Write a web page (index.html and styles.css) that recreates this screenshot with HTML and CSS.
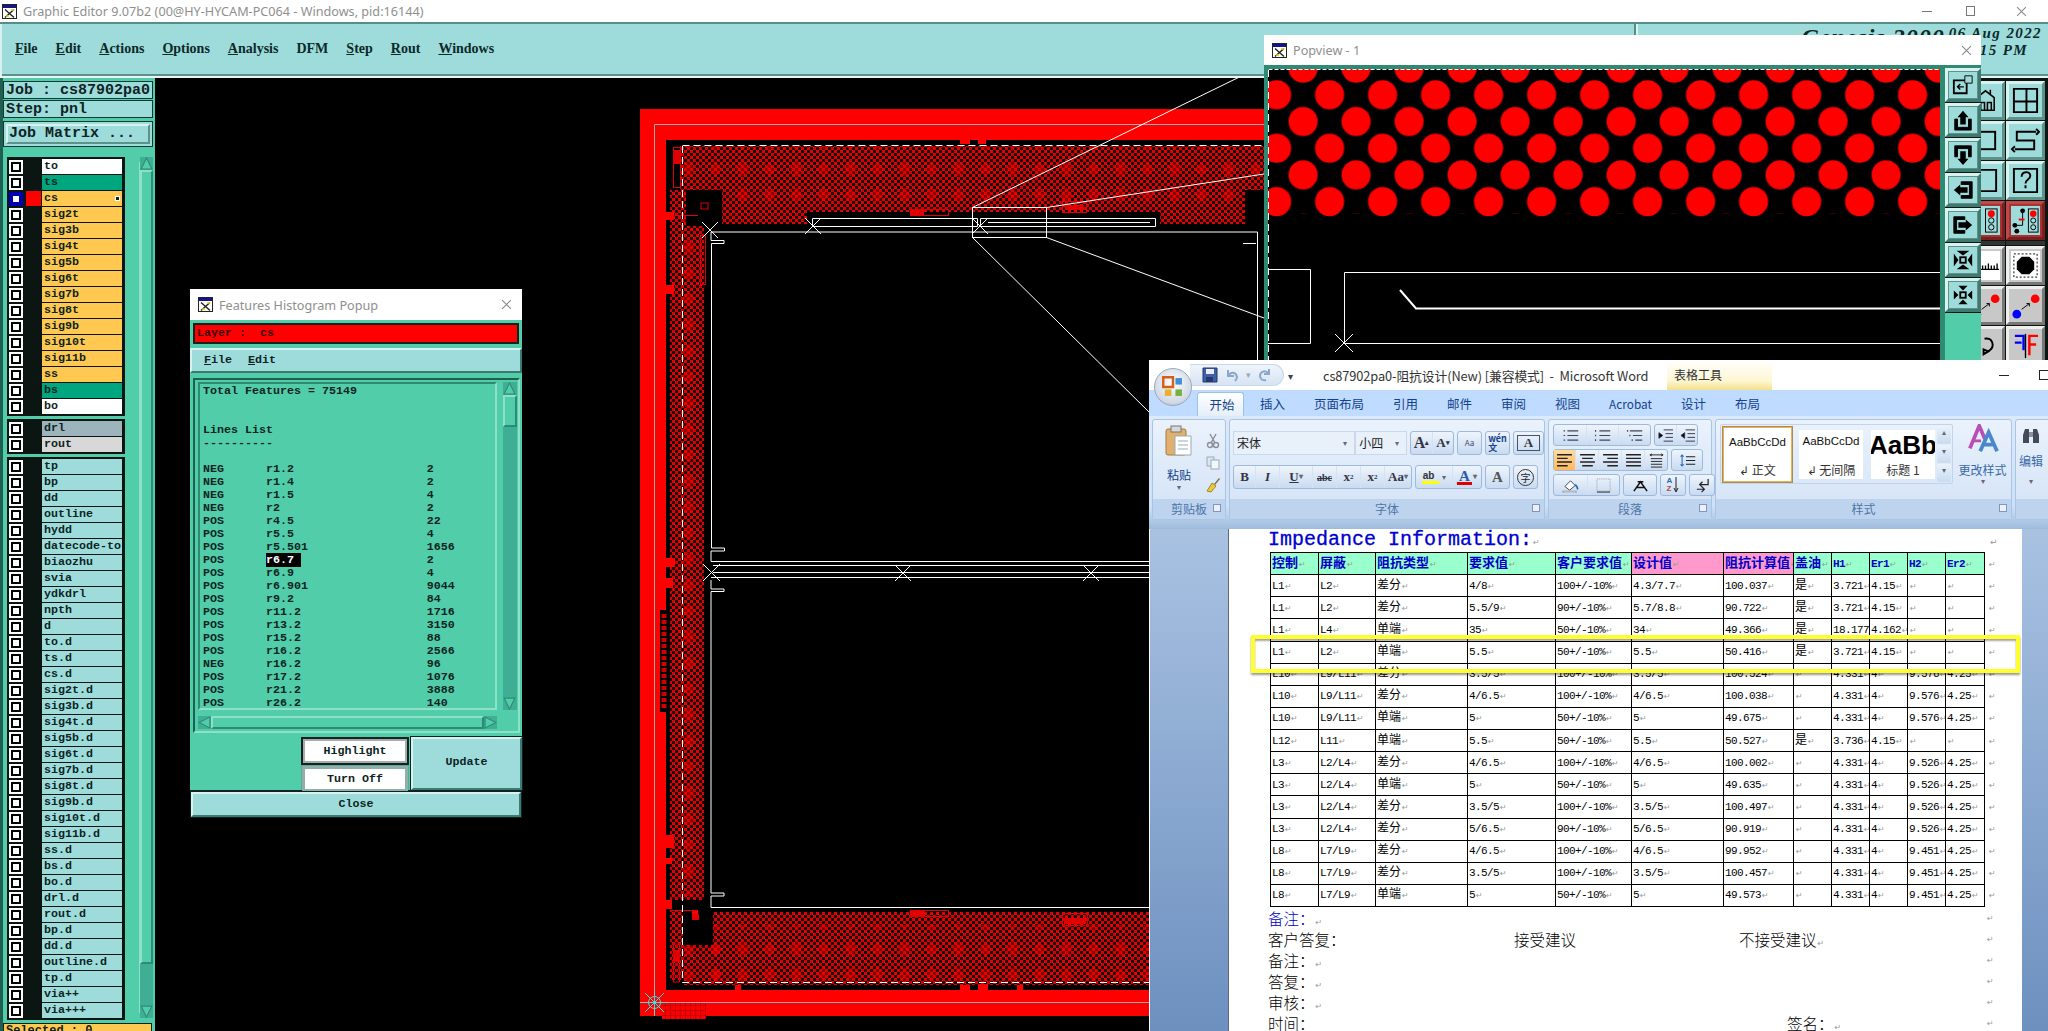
FILE: index.html
```html
<!DOCTYPE html>
<html lang="en">
<head>
<meta charset="utf-8">
<title>Graphic Editor</title>
<link rel="stylesheet" href="styles.css">
</head>
<body>
<svg class="defs" width="0" height="0">
  <symbol id="xlogo" viewBox="0 0 15 15">
    <rect x=".5" y=".5" width="14" height="14" fill="#fff" stroke="#222"/>
    <rect x="1" y="1" width="13" height="3" fill="#14148c"/>
    <path d="M3 5.5l9 8M12 5.5l-9 8" stroke="#222" stroke-width="1.4"/>
    <path d="M4 12h3M9 6h3" stroke="#e6d200" stroke-width="1.6"/>
  </symbol>
  <symbol id="cross" viewBox="0 0 10 10"><path d="M1 1l8 8M9 1l-8 8" stroke="#8a8a8a" fill="none"/></symbol>
</svg>
<div class="app">
  <header class="titlebar">
    <svg class="tlogo"><use href="#xlogo"/></svg>
    <span class="ttext">Graphic Editor 9.07b2 (00@HY-HYCAM-PC064 - Windows, pid:16144)</span>
    <span class="wctl wmin"></span><span class="wctl wmax"></span>
    <svg class="wclose"><use href="#cross"/></svg>
  </header>
  <div class="menubar">
    <nav class="menus">
      <span><u>F</u>ile</span><span><u>E</u>dit</span><span><u>A</u>ctions</span><span><u>O</u>ptions</span><span><u>A</u>nalysis</span><span>DFM</span><span><u>S</u>tep</span><span><u>R</u>out</span><span><u>W</u>indows</span>
    </nav>
    <div class="clock">
      <div class="cline"><span class="brand">Genesis 2000</span><span class="date">06 Aug 2022</span></div>
      <div class="time">15 PM</div>
    </div>
  </div>
  <div class="workspace">
    <aside class="sidebar">
      <div class="infobox">Job : cs87902pa0</div>
      <div class="infobox">Step: pnl</div>
      <div class="matrixwrap"><div class="matrixbtn">Job Matrix ...</div></div>
      <div class="layerarea">
        <div class="layers">
          <div class="lblock">
            <div class="lrow"><i class="chk"></i><i class="sw"></i><span class="ln white">to</span></div>
            <div class="lrow"><i class="chk"></i><i class="sw"></i><span class="ln green">ts</span></div>
            <div class="lrow"><i class="chk on"></i><i class="sw red"></i><span class="ln orange">cs<b class="mark"></b></span></div>
            <div class="lrow"><i class="chk"></i><i class="sw"></i><span class="ln orange">sig2t</span></div>
            <div class="lrow"><i class="chk"></i><i class="sw"></i><span class="ln orange">sig3b</span></div>
            <div class="lrow"><i class="chk"></i><i class="sw"></i><span class="ln orange">sig4t</span></div>
            <div class="lrow"><i class="chk"></i><i class="sw"></i><span class="ln orange">sig5b</span></div>
            <div class="lrow"><i class="chk"></i><i class="sw"></i><span class="ln orange">sig6t</span></div>
            <div class="lrow"><i class="chk"></i><i class="sw"></i><span class="ln orange">sig7b</span></div>
            <div class="lrow"><i class="chk"></i><i class="sw"></i><span class="ln orange">sig8t</span></div>
            <div class="lrow"><i class="chk"></i><i class="sw"></i><span class="ln orange">sig9b</span></div>
            <div class="lrow"><i class="chk"></i><i class="sw"></i><span class="ln orange">sig10t</span></div>
            <div class="lrow"><i class="chk"></i><i class="sw"></i><span class="ln orange">sig11b</span></div>
            <div class="lrow"><i class="chk"></i><i class="sw"></i><span class="ln orange">ss</span></div>
            <div class="lrow"><i class="chk"></i><i class="sw"></i><span class="ln green">bs</span></div>
            <div class="lrow"><i class="chk"></i><i class="sw"></i><span class="ln white">bo</span></div>
          </div>
          <div class="lblock">
            <div class="lrow"><i class="chk"></i><i class="sw"></i><span class="ln steel">drl</span></div>
            <div class="lrow"><i class="chk"></i><i class="sw"></i><span class="ln grey">rout</span></div>
          </div>
          <div class="lblock">
            <div class="lrow"><i class="chk"></i><i class="sw"></i><span class="ln">tp</span></div>
            <div class="lrow"><i class="chk"></i><i class="sw"></i><span class="ln">bp</span></div>
            <div class="lrow"><i class="chk"></i><i class="sw"></i><span class="ln">dd</span></div>
            <div class="lrow"><i class="chk"></i><i class="sw"></i><span class="ln">outline</span></div>
            <div class="lrow"><i class="chk"></i><i class="sw"></i><span class="ln">hydd</span></div>
            <div class="lrow"><i class="chk"></i><i class="sw"></i><span class="ln">datecode-to</span></div>
            <div class="lrow"><i class="chk"></i><i class="sw"></i><span class="ln">biaozhu</span></div>
            <div class="lrow"><i class="chk"></i><i class="sw"></i><span class="ln">svia</span></div>
            <div class="lrow"><i class="chk"></i><i class="sw"></i><span class="ln">ydkdrl</span></div>
            <div class="lrow"><i class="chk"></i><i class="sw"></i><span class="ln">npth</span></div>
            <div class="lrow"><i class="chk"></i><i class="sw"></i><span class="ln">d</span></div>
            <div class="lrow"><i class="chk"></i><i class="sw"></i><span class="ln">to.d</span></div>
            <div class="lrow"><i class="chk"></i><i class="sw"></i><span class="ln">ts.d</span></div>
            <div class="lrow"><i class="chk"></i><i class="sw"></i><span class="ln">cs.d</span></div>
            <div class="lrow"><i class="chk"></i><i class="sw"></i><span class="ln">sig2t.d</span></div>
            <div class="lrow"><i class="chk"></i><i class="sw"></i><span class="ln">sig3b.d</span></div>
            <div class="lrow"><i class="chk"></i><i class="sw"></i><span class="ln">sig4t.d</span></div>
            <div class="lrow"><i class="chk"></i><i class="sw"></i><span class="ln">sig5b.d</span></div>
            <div class="lrow"><i class="chk"></i><i class="sw"></i><span class="ln">sig6t.d</span></div>
            <div class="lrow"><i class="chk"></i><i class="sw"></i><span class="ln">sig7b.d</span></div>
            <div class="lrow"><i class="chk"></i><i class="sw"></i><span class="ln">sig8t.d</span></div>
            <div class="lrow"><i class="chk"></i><i class="sw"></i><span class="ln">sig9b.d</span></div>
            <div class="lrow"><i class="chk"></i><i class="sw"></i><span class="ln">sig10t.d</span></div>
            <div class="lrow"><i class="chk"></i><i class="sw"></i><span class="ln">sig11b.d</span></div>
            <div class="lrow"><i class="chk"></i><i class="sw"></i><span class="ln">ss.d</span></div>
            <div class="lrow"><i class="chk"></i><i class="sw"></i><span class="ln">bs.d</span></div>
            <div class="lrow"><i class="chk"></i><i class="sw"></i><span class="ln">bo.d</span></div>
            <div class="lrow"><i class="chk"></i><i class="sw"></i><span class="ln">drl.d</span></div>
            <div class="lrow"><i class="chk"></i><i class="sw"></i><span class="ln">rout.d</span></div>
            <div class="lrow"><i class="chk"></i><i class="sw"></i><span class="ln">bp.d</span></div>
            <div class="lrow"><i class="chk"></i><i class="sw"></i><span class="ln">dd.d</span></div>
            <div class="lrow"><i class="chk"></i><i class="sw"></i><span class="ln">outline.d</span></div>
            <div class="lrow"><i class="chk"></i><i class="sw"></i><span class="ln">tp.d</span></div>
            <div class="lrow"><i class="chk"></i><i class="sw"></i><span class="ln">via++</span></div>
            <div class="lrow"><i class="chk"></i><i class="sw"></i><span class="ln">via+++</span></div>
          </div>
        </div>
        <div class="vscroll">
          <svg class="arrow" viewBox="0 0 12 12"><path d="M6 1L11 11H1z" fill="#52cdaa" stroke="#2f8a74"/></svg>
          <div class="vthumb"></div>
          <div class="vtrack"></div>
          <svg class="arrow" viewBox="0 0 12 12"><path d="M6 11L11 1H1z" fill="#52cdaa" stroke="#2f8a74"/></svg>
        </div>
      </div>
      <div class="selected">Selected : 0</div>
    </aside>

    <main class="canvas">
      <svg class="pcb" viewBox="155 78 1785 953" width="1785" height="953">
        <defs>
          <pattern id="dith" width="6" height="6" patternUnits="userSpaceOnUse">
            <rect width="6" height="6" fill="#140000"/>
            <rect width="3" height="3" fill="#e60000"/>
            <rect x="3" y="3" width="3" height="3" fill="#d80000"/>
          </pattern>
          <pattern id="dia" width="27" height="26" patternUnits="userSpaceOnUse">
            <path d="M13.5 5L20 13 13.5 21 7 13z" fill="#f00000" opacity=".5"/>
          </pattern>
          <pattern id="grid" width="5" height="5" patternUnits="userSpaceOnUse">
            <path d="M0 0H5M0 0V5" stroke="#900" fill="none"/>
          </pattern>
        </defs>
        <rect x="640" y="109" width="1300" height="907" fill="#f00"/>
        <rect x="666" y="140" width="1274" height="850" fill="#000"/>
        <g fill="url(#dith)">
          <rect x="680" y="146" width="600" height="66"/>
          <rect x="722" y="212" width="85" height="12"/>
          <rect x="1160" y="212" width="85" height="12"/>
          <rect x="670" y="190" width="34" height="710"/>
          <rect x="713" y="912" width="436" height="73"/>
          <rect x="684" y="945" width="40" height="40"/>
          <rect x="670" y="910" width="14" height="70"/>
        </g>
        <g fill="url(#dia)">
          <rect x="680" y="146" width="600" height="66"/>
          <rect x="670" y="216" width="34" height="680"/>
          <rect x="713" y="925" width="436" height="60"/>
          <rect x="684" y="945" width="40" height="40"/>
        </g>
        <rect x="686" y="190" width="36" height="36" fill="#000"/>
        <rect x="1245" y="190" width="36" height="36" fill="#000"/>
        <rect x="683" y="905" width="30" height="40" fill="#000"/>
        <g fill="#f00">
          <rect x="666" y="212" width="8" height="8"/>
          <rect x="666" y="285" width="8" height="9"/>
          <rect x="666" y="558" width="9" height="9"/>
          <rect x="666" y="578" width="7" height="10"/>
          <rect x="666" y="835" width="8" height="13"/>
          <rect x="666" y="858" width="6" height="6"/>
          <rect x="666" y="900" width="6" height="9"/>
          <rect x="960" y="140" width="10" height="4"/>
          <rect x="978" y="140" width="8" height="4"/>
          <rect x="735" y="985" width="6" height="5"/>
          <rect x="960" y="985" width="10" height="5"/>
          <rect x="978" y="984" width="10" height="6"/>
          <rect x="1017" y="985" width="6" height="5"/>
          <rect x="692" y="910" width="6" height="6"/>
        </g>
        <path d="M654.5 1016V124.5H1940M640 1002.5H1940" stroke="#aaa" fill="none"/>
        <rect x="662" y="1003" width="44" height="16" fill="#f00"/>
        <rect x="662" y="1003" width="44" height="16" fill="url(#grid)"/>
        <g fill="none" stroke="#e00000">
          <rect x="673.5" y="147.5" width="7" height="40"/>
          <rect x="700.5" y="235.5" width="5" height="49"/>
          <rect x="910.5" y="209.5" width="38" height="6"/>
          <rect x="1062.5" y="201.5" width="24" height="11"/>
          <rect x="701" y="203" width="7" height="6"/>
          <rect x="910.5" y="910.5" width="38" height="6"/>
          <rect x="1062.5" y="913.5" width="25" height="12"/>
          <rect x="673.5" y="944" width="6" height="38"/>
          <path d="M672 215.5H698M672 910.5H697"/>
        </g>
        <g fill="#e00000">
          <rect x="674" y="150" width="6" height="14"/>
          <rect x="910" y="209" width="14" height="7"/>
          <rect x="1065" y="205" width="19" height="5"/>
          <rect x="910" y="910" width="15" height="7"/>
          <rect x="1064" y="918" width="22" height="6"/>
          <rect x="692" y="914" width="7" height="6"/>
          <rect x="674" y="950" width="5" height="12"/>
        </g>
        <rect x="660" y="610" width="8" height="102" fill="#000"/>
        <path d="M664 614V708" stroke="#d00000" stroke-width="5" stroke-dasharray="4 2" fill="none"/>
        <path d="M682.5 146V982.5H1940M682.5 145.5H1940" stroke="#fff" stroke-dasharray="7 4" fill="none"/>
        <g fill="none" stroke="#fff">
          <path d="M1257.5 360V232H711V240.5H724V243.5H711.5V548H724.5V551H711V561.5H1257"/>
          <path d="M713 565.5H1257M713 572.5H1257M711 577.5H1257"/>
          <path d="M711 580V589H724V591.5H711V893H724V896H711V907.5H1149"/>
          <path d="M1243 243.5H1256"/>
          <path d="M812.5 218.5H977.5V226.5H812.5zM980.5 218.5H1155.5V226.5H980.5z"/>
          <path d="M988 222.5H1150"/>
          <rect x="972.5" y="207.5" width="74" height="30"/>
          <path d="M972.5 207.5L1264 65M1046.5 207.5L1264 174M1046.5 237.5L1264 318M972.5 237.5L1149 412"/>
          <path d="M702 222l16 16M718 222l-16 16M805 218l16 16M821 218l-16 16M972 218l16 16M988 218l-16 16"/>
          <path d="M703 564l17 17M720 564l-17 17M895 565l16 16M911 565l-16 16M1083 565l16 16M1099 565l-16 16"/>
        </g>
        <g stroke="#3fe0e0" fill="none">
          <circle cx="654.5" cy="1002.5" r="6"/>
          <path d="M645 993l19 19M664 993l-19 19M654.5 990v25M642 1002.5h25"/>
        </g>
      </svg>
    </main>

    <aside class="toolbar">
      <div class="tools">
        <div class="tool"><svg viewBox="0 0 30 30"><path d="M6 25V12L15 5l9 7v13zM10 25v-8h4v8M17 25v-8h4v8M20 4v5" fill="none" stroke="#000" stroke-width="1.6"/></svg></div>
        <div class="tool"><svg viewBox="0 0 30 30"><path d="M3 3h24v24H3zM3 16h24M16 16V3M16 16v11" fill="none" stroke="#000" stroke-width="2"/></svg></div>
        <div class="tool"><svg viewBox="0 0 30 30"><rect x="5" y="6" width="20" height="18" fill="none" stroke="#000" stroke-width="2"/></svg></div>
        <div class="tool"><svg viewBox="0 0 30 30"><path d="M26 6H6v9h18v9H4M26 3l3 3-3 3M4 21l-3 3 3 3" fill="none" stroke="#000" stroke-width="2"/></svg></div>
        <div class="tool"><svg viewBox="0 0 30 30"><path d="M4 4h22v22H4z" fill="none" stroke="#000" stroke-width="2"/></svg></div>
        <div class="tool"><svg viewBox="0 0 30 30"><path d="M3 3h24v24H3z" fill="none" stroke="#000" stroke-width="2"/><path d="M11 11c0-6 9-6 9-1 0 4-5 4-5 8M15 20v3" fill="none" stroke="#000" stroke-width="2"/></svg></div>
        <div class="tool rd"><svg viewBox="0 0 30 30"><path d="M8 5v15h-5M3 20H1" stroke="#00c" stroke-width="2" fill="none"/><rect x="15" y="3" width="12" height="24" fill="#9edcdc" stroke="#000"/><circle cx="21" cy="8" r="3.6" fill="#f00"/><circle cx="21" cy="15" r="2.8" fill="none" stroke="#000"/><circle cx="21" cy="22" r="2.8" fill="none" stroke="#000"/></svg></div>
        <div class="tool rd"><svg viewBox="0 0 30 30"><path d="M12 5v15H5" stroke="#000" fill="none"/><circle cx="12" cy="5" r="2.5"/><circle cx="4" cy="20" r="2.5"/><circle cx="6" cy="26" r="2.5"/><path d="M8 14h6" stroke="#f00" stroke-width="2"/><rect x="18" y="3" width="10" height="24" fill="#9edcdc" stroke="#000"/><circle cx="23" cy="8" r="3.4" fill="#f00"/><circle cx="23" cy="15" r="2.6" fill="none" stroke="#000"/><circle cx="23" cy="22" r="2.6" fill="none" stroke="#000"/></svg></div>
        <div class="sep"></div><div class="sep"></div>
        <div class="tool g wh"><svg viewBox="0 0 30 30"><path d="M1 19h28M3 15v4M6 15v4M9 13v6M12 15v4M15 15v4M18 13v6M21 15v4M24 15v4M27 13v6" stroke="#000" stroke-width="1.4"/></svg></div>
        <div class="tool g wh"><svg viewBox="0 0 30 30"><rect x="3" y="3" width="24" height="24" fill="none" stroke="#000" stroke-dasharray="2 2"/><path d="M11 6h8l5 5v8l-5 5h-8l-5-5v-8z"/></svg></div>
        <div class="tool g"><svg viewBox="0 0 30 30"><circle cx="25" cy="8" r="4.5" fill="#f00"/><circle cx="6" cy="24" r="4.5" fill="#00f"/><path d="M11 19l8-6M16 13h3v3" fill="none" stroke="#000"/></svg></div>
        <div class="tool g"><svg viewBox="0 0 30 30"><circle cx="25" cy="8" r="4.5" fill="#f00"/><circle cx="6" cy="24" r="4.5" fill="#00f"/><path d="M11 19l8-6M16 13h3v3" fill="none" stroke="#000"/></svg></div>
        <div class="tool g"><svg viewBox="0 0 30 30"><path d="M14 8c8-2 12 8 4 13M18 21l-5-2v5z" fill="none" stroke="#000" stroke-width="2"/></svg></div>
        <div class="tool g"><svg viewBox="0 0 30 30"><path d="M4 5h9v15M4 12h7" fill="none" stroke="#00f" stroke-width="2.5"/><path d="M15 3v25" stroke="#000" stroke-width="1.4"/><path d="M28 5h-9v20M19 14h7" fill="none" stroke="#f00" stroke-width="2.5"/></svg></div>
      </div>
    </aside>
  </div>
</div>

<!-- Features Histogram Popup -->
<section class="win features">
  <div class="wtitle fetitle">
    <svg class="tlogo"><use href="#xlogo"/></svg>
    <span class="ttext">Features Histogram Popup</span>
    <svg class="wx"><use href="#cross"/></svg>
  </div>
  <div class="layerbar"><div class="layerred">Layer :  cs</div></div>
  <div class="fmenu"><span><u>F</u>ile</span><span><u>E</u>dit</span></div>
  <div class="flist">
    <div class="flistin">
      <div class="ftext"><pre class="fpre">Total Features = 75149


Lines List
----------

NEG      r1.2                   2
NEG      r1.4                   2
NEG      r1.5                   4
NEG      r2                     2
POS      r4.5                   22
POS      r5.5                   4
POS      r5.501                 1656
POS      <span class="hl">r6.7 </span>                  2
POS      r6.9                   4
POS      r6.901                 9044
POS      r9.2                   84
POS      r11.2                  1716
POS      r13.2                  3150
POS      r15.2                  88
POS      r16.2                  2566
NEG      r16.2                  96
POS      r17.2                  1076
POS      r21.2                  3888
POS      r26.2                  140</pre></div>
      <div class="fvs">
        <svg class="arrow" viewBox="0 0 12 12"><path d="M6 1L11 11H1z" fill="#52cdaa" stroke="#2f8a74"/></svg>
        <div class="fvthumb"></div>
        <div class="vtrack"></div>
        <svg class="arrow" viewBox="0 0 12 12"><path d="M6 11L11 1H1z" fill="#52cdaa" stroke="#2f8a74"/></svg>
      </div>
    </div>
    <div class="fhs">
      <svg class="harrow" viewBox="0 0 12 12"><path d="M1 6L11 1V11z" fill="#52cdaa" stroke="#2f8a74"/></svg>
      <div class="fhthumb"></div>
      <svg class="harrow" viewBox="0 0 12 12"><path d="M11 6L1 1V11z" fill="#52cdaa" stroke="#2f8a74"/></svg>
    </div>
  </div>
  <div class="fact">
    <div class="fspace"></div>
    <div class="fstack">
      <div class="whitebtn active">Highlight</div>
      <div class="whitebtn">Turn Off</div>
    </div>
    <div class="bevel update">Update</div>
  </div>
  <div class="bevel closebtn">Close</div>
</section>

<!-- Popview -->
<section class="win popview">
  <div class="wtitle poptitle">
    <svg class="tlogo"><use href="#xlogo"/></svg>
    <span class="ttext">Popview - 1</span>
    <svg class="wx"><use href="#cross"/></svg>
  </div>
  <div class="popbody">
    <div class="popcanvas">
      <svg class="popsvg" viewBox="1268 69 672 291" width="672" height="291">
        <defs>
          <pattern id="dots" x="1276.6" y="41.4" width="53" height="53.4" patternUnits="userSpaceOnUse">
            <circle cx="0" cy="0" r="14.6" fill="#f00"/>
            <circle cx="53" cy="0" r="14.6" fill="#f00"/>
            <circle cx="0" cy="53.4" r="14.6" fill="#f00"/>
            <circle cx="53" cy="53.4" r="14.6" fill="#f00"/>
            <circle cx="26.5" cy="26.7" r="14.6" fill="#f00"/>
          </pattern>
          <pattern id="dotsb" x="1276.6" y="180" width="53" height="60" patternUnits="userSpaceOnUse">
            <circle cx="0" cy="21.6" r="14.6" fill="#f00"/>
            <circle cx="53" cy="21.6" r="14.6" fill="#f00"/>
          </pattern>
        </defs>
        <rect x="1268" y="69" width="672" height="144.6" fill="url(#dots)"/>
        <rect x="1268" y="213" width="672" height="5" fill="url(#dotsb)"/>
        <path d="M1268.5 69.5H1940" stroke="#fff" stroke-dasharray="4 2" fill="none"/>
        <path d="M1268.5 70V360" stroke="#fff" stroke-dasharray="7 4" fill="none"/>
        <path d="M1268 269.5H1310.5V343.5H1268M1940 272.5H1344.5V343.5H1940" stroke="#fff" fill="none"/>
        <path d="M1400 290L1416 308.5H1940" stroke="#fff" stroke-width="2" fill="none"/>
        <path d="M1335 334l18 18M1353 334l-18 18" stroke="#fff" fill="none"/>
      </svg>
    </div>
    <div class="popside">
      <div class="pbtn"><svg viewBox="0 0 24 24"><path d="M2 7h14v14H2z" fill="none" stroke="#000" stroke-width="2"/><path d="M14 2h8v8h-8z" fill="#9edcdc" stroke="#000"/><path d="M13 14H6M9 11l-3 3 3 3" stroke="#000" fill="none" stroke-width="1.5"/></svg></div>
      <div class="pbtn"><svg viewBox="0 0 24 24"><path d="M3 11h3v9h12v-9h3v12H3z" stroke="#000"/><path d="M12 2l6 7h-3v8H9V9H6z"/></svg></div>
      <div class="pbtn"><svg viewBox="0 0 24 24"><path d="M3 2h18v12h-3V5H6v9H3z" stroke="#000"/><path d="M12 23l-6-7h3V8h6v8h3z"/></svg></div>
      <div class="pbtn"><svg viewBox="0 0 24 24"><path d="M10 3h12v18H10v-3h9V6h-9z" stroke="#000"/><path d="M2 12l7-6v3h8v6H9v3z"/></svg></div>
      <div class="pbtn"><svg viewBox="0 0 24 24"><path d="M14 3H2v18h12v-3H5V6h9z" stroke="#000"/><path d="M22 12l-7-6v3H7v6h8v3z"/></svg></div>
      <div class="pbtn"><svg viewBox="0 0 24 24"><rect x="9" y="9" width="6" height="6" fill="none" stroke="#000" stroke-width="2"/><path d="M2 5l5 7-5 7zM22 5l-5 7 5 7zM5 2l7 5 7-5zM5 22l7-5 7 5z"/></svg></div>
      <div class="pbtn"><svg viewBox="0 0 24 24"><rect x="9" y="9" width="6" height="6" fill="none" stroke="#000" stroke-width="2"/><path d="M7 12L2 7v10zM17 12l5-5v10zM12 7L7 2h10zM12 17l-5 5h10z"/></svg></div>
      <div class="pfill"></div>
    </div>
  </div>
</section>

<!-- Word -->
<section class="win word">
  <div class="wdtitle">
    <div class="orb"><svg viewBox="0 0 32 32" width="26" height="26"><path d="M4 4h12v12H4z" fill="none" stroke="#d4601a" stroke-width="3"/><rect x="19" y="5" width="8" height="8" fill="#3f8ed8"/><rect x="6" y="19" width="8" height="8" fill="#e8b030"/><rect x="19" y="19" width="8" height="8" fill="#78b040"/></svg></div>
    <div class="qat">
      <svg viewBox="0 0 16 16" width="16" height="16"><path d="M1 1h14v14H1z" fill="#3f5fa8" stroke="#24386c"/><rect x="4" y="2" width="8" height="5" fill="#e8eefa"/><rect x="4" y="10" width="7" height="5" fill="#24386c"/></svg>
      <svg viewBox="0 0 16 16" width="16" height="16"><path d="M4 3v6h6M4 9c3-5 8-4 9 1 0 2-1 3-2 4" fill="none" stroke="#8ca6cc" stroke-width="2"/></svg>
      <span class="caret">▾</span>
      <svg viewBox="0 0 16 16" width="16" height="16"><path d="M12 2v5H7M12 7C8 2 3 5 3 9c0 3 3 5 6 4" fill="none" stroke="#8ca6cc" stroke-width="2"/></svg>
    </div>
    <span class="qatdrop">▾</span>
    <span class="wdname">cs87902pa0-阻抗设计(New) [兼容模式]  -  Microsoft Word</span>
    <span class="ctxtab">表格工具</span>
    <span class="wmin2"></span><span class="wmax2"></span>
  </div>
  <div class="wdtabs">
    <span class="tab act">开始</span><span class="tab">插入</span><span class="tab">页面布局</span><span class="tab">引用</span><span class="tab">邮件</span><span class="tab">审阅</span><span class="tab">视图</span><span class="tab acro">Acrobat</span><span class="tab">设计</span><span class="tab">布局</span>
  </div>
  <div class="ribbon">
    <div class="rg rclip">
      <div class="rb clipb">
        <div class="paste">
          <svg viewBox="0 0 28 32" width="28" height="32"><rect x="1" y="4" width="20" height="26" rx="2" fill="#e0b070" stroke="#a87a3c"/><rect x="6" y="1" width="10" height="6" fill="#d8d8d8" stroke="#777"/><path d="M10 11h16v19H10z" fill="#fff" stroke="#9aa"/><path d="M13 16h10M13 20h10M13 24h10" stroke="#9ab"/></svg>
          <span>粘贴</span><span class="drop">▾</span>
        </div>
        <div class="clipicons">
          <svg viewBox="0 0 14 16" width="14" height="16"><path d="M4 1l5 9M10 1l-5 9" stroke="#8a8f98" stroke-width="1.4"/><circle cx="4" cy="12" r="2.5" fill="none" stroke="#8a8f98" stroke-width="1.4"/><circle cx="10" cy="12" r="2.5" fill="none" stroke="#8a8f98" stroke-width="1.4"/></svg>
          <svg viewBox="0 0 14 14" width="14" height="14"><rect x="1" y="1" width="7" height="9" fill="#dce6f2" stroke="#9aaabb"/><rect x="5" y="4" width="8" height="9" fill="#f2f6fb" stroke="#9aaabb"/></svg>
          <svg viewBox="0 0 16 16" width="16" height="16"><path d="M9 7l5-6 1 1-5 6z" fill="#7a6a50"/><path d="M2 14l5-8 4 3-5 6z" fill="#e8c840" stroke="#a08a20"/></svg>
        </div>
      </div>
      <div class="rl">剪贴板<i class="launch"></i></div>
    </div>
    <div class="rg rfont">
      <div class="rb fontb">
        <div class="frow">
          <div class="combo c1">宋体<span class="drop">▾</span></div>
          <div class="combo c2">小四<span class="drop">▾</span></div>
          <div class="bg"><span class="bi w21 ser big">A<sup>▴</sup></span><span class="bi w21 ser">A<sup>▾</sup></span></div>
          <div class="bg"><span class="bi w23 tiny">Aa</span></div>
          <div class="bg"><span class="bi w23 wen">wén<br>文</span></div>
          <div class="bg"><span class="bi w23 ser boxa">A</span></div>
        </div>
        <div class="frow">
          <div class="bg">
            <span class="bi w21 ser">B</span><span class="bi w24 ser it">I</span><span class="bi w33 ser"><u>U</u><span class="drop">▾</span></span><span class="bi w24 ser st">abc</span><span class="bi w24 ser">x<sub>2</sub></span><span class="bi w24 ser">x<sup>2</sup></span><span class="bi w27 ser">Aa<span class="drop">▾</span></span>
          </div>
          <div class="bg"><span class="bi w36"><span class="hi">ab</span><span class="drop">▾</span></span><span class="bi w29 ser"><span class="fa">A</span><span class="drop">▾</span></span></div>
          <div class="bg"><span class="bi w23 ser ga">A</span></div>
          <div class="bg"><span class="bi w23"><span class="zi">字</span></span></div>
        </div>
      </div>
      <div class="rl">字体<i class="launch"></i></div>
    </div>
    <div class="rg rpara">
      <div class="rb parab">
        <div class="prow">
          <div class="bg pb"><span class="bi w32 ic"><svg viewBox="0 0 22 16"><path d="M7 2h14M7 8h14M7 14h14M2 2h2M2 8h2M2 14h2" stroke="#445" stroke-width="1.5"/></svg></span><span class="bi w32 ic"><svg viewBox="0 0 22 16"><path d="M7 2h14M7 8h14M7 14h14M2 1v2M2 7v2M2 13v2" stroke="#445" stroke-width="1.5"/></svg></span><span class="bi w32 ic"><svg viewBox="0 0 22 16"><path d="M5 2h16M9 8h12M12 14h9M2 1v2M5 7v2M8 13v2" stroke="#445" stroke-width="1.5"/></svg></span></div>
          <div class="bg pb"><span class="bi w21 ic"><svg viewBox="0 0 16 16"><path d="M6 2h10M8 6h8M8 10h8M6 14h10M5 8L1 5v6z" stroke="#334"/></svg></span><span class="bi w21 ic"><svg viewBox="0 0 16 16"><path d="M6 2h10M8 6h8M8 10h8M6 14h10M1 8l4-3v6z" stroke="#334"/></svg></span></div>
        </div>
        <div class="prow">
          <div class="bg pb">
            <span class="bi w21 ic aon"><svg viewBox="0 0 16 14"><path d="M1 1.5h14M1 5h10M1 8.5h14M1 12h10" stroke="#222" stroke-width="1.4"/></svg></span>
            <span class="bi w23 ic"><svg viewBox="0 0 16 14"><path d="M1 1.5h14M3 5h10M1 8.5h14M3 12h10" stroke="#222" stroke-width="1.4"/></svg></span>
            <span class="bi w23 ic"><svg viewBox="0 0 16 14"><path d="M1 1.5h14M5 5h10M1 8.5h14M5 12h10" stroke="#222" stroke-width="1.4"/></svg></span>
            <span class="bi w23 ic"><svg viewBox="0 0 16 14"><path d="M1 1.5h14M1 5h14M1 8.5h14M1 12h14" stroke="#222" stroke-width="1.4"/></svg></span>
            <span class="bi w23 ic"><svg viewBox="0 0 16 16"><path d="M2 6h12M2 9h12M2 12h12M2 15h12M1 2h14M3 1L1 2l2 1M13 1l2 1-2 1" stroke="#222" fill="none"/></svg></span>
          </div>
          <div class="bg pb"><span class="bi w30 ic"><svg viewBox="0 0 22 16"><path d="M4 1v14M2 3l2-2 2 2M2 13l2 2 2-2" stroke="#2a6ab8" stroke-width="1.4" fill="none"/><path d="M9 3h12M9 8h12M9 13h12" stroke="#222" stroke-width="1.3"/></svg></span></div>
        </div>
        <div class="prow">
          <div class="bg pb"><span class="bi w33 ic"><svg viewBox="0 0 18 16"><path d="M3 9l6-6 5 5-6 5z" fill="#fff" stroke="#345"/><path d="M14 7c2 2 3 4 2 5" stroke="#2a6ab8" fill="none" stroke-width="2"/><rect x="1" y="14" width="14" height="2" fill="#eee" stroke="#99a"/></svg></span><span class="bi w32 ic"><svg viewBox="0 0 16 16"><rect x="1" y="1" width="14" height="13" fill="none" stroke="#99a" stroke-dasharray="1 1"/><path d="M1 15h14" stroke="#222"/></svg></span></div>
          <div class="bg pb"><span class="bi w32 ic"><svg viewBox="0 0 18 14"><path d="M2 13L9 3l7 10M4 9h10M6 3h6" stroke="#111" stroke-width="1.6" fill="none"/></svg></span></div>
          <div class="bg pb"><span class="bi w24 az"><span class="azstack"><b class="aza">A</b><b class="azz">Z</b></span><svg viewBox="0 0 6 16" width="6" height="16"><path d="M3 0v14M1 11l2 4 2-4" stroke="#222" fill="none"/></svg></span></div>
          <div class="bg pb"><span class="bi w24 ic"><svg viewBox="0 0 14 16"><path d="M13 1v6H5M7 4L4 7l3 3M1 12h8M6 9l3 3-3 3" stroke="#222" fill="none" stroke-width="1.3"/></svg></span></div>
        </div>
      </div>
      <div class="rl">段落<i class="launch"></i></div>
    </div>
    <div class="rg rstyle">
      <div class="rb styleb">
        <div class="gal">
          <div class="sty cur"><span class="s1">AaBbCcDd</span><span class="s2">↲ 正文</span></div>
          <div class="sty"><span class="s1">AaBbCcDd</span><span class="s2">↲ 无间隔</span></div>
          <div class="sty sty3"><span class="s3">AaBb</span><span class="s2">标题 1</span></div>
          <div class="galscroll"><span>▴</span><span>▾</span><span>▾</span></div>
        </div>
        <div class="chg">
          <svg viewBox="0 0 34 32" width="32" height="30"><path d="M3 26L13 2l6 14" fill="none" stroke="#b94fb4" stroke-width="4"/><path d="M7 18h8" stroke="#b94fb4" stroke-width="3"/><path d="M14 29l9-20 9 20M18 22h10" fill="none" stroke="#4a88cc" stroke-width="4"/></svg>
          <span>更改样式</span><span class="drop">▾</span>
        </div>
      </div>
      <div class="rl">样式<i class="launch"></i></div>
    </div>
    <div class="rg redit">
      <div class="rb editb">
        <svg viewBox="0 0 20 16" width="20" height="16"><path d="M2 7l2-6h4v14H2zM12 1h4l2 6v8h-6z" fill="#444b55"/><rect x="8" y="4" width="4" height="5" fill="#8892a0"/></svg>
        <span>编辑</span><span class="drop">▾</span>
      </div>
      <div class="rl"></div>
    </div>
  </div>
  <div class="wdbody">
    <div class="page">
      <h1 class="imp mk">Impedance Information:</h1>
      <span class="rmark"></span>
      <table class="imptab">
        <colgroup>
          <col class="k48"><col class="k57"><col class="k92"><col class="k88"><col class="k76"><col class="k92"><col class="k70"><col class="k38"><col class="k38"><col class="k38"><col class="k38"><col class="k39"><col class="k14">
        </colgroup>
        <thead>
          <tr><th>控制</th><th>屏蔽</th><th>阻抗类型</th><th>要求值</th><th>客户要求值</th><th class="pk">设计值</th><th class="pk">阻抗计算值</th><th>盖油</th><th class="sm">H1</th><th class="sm">Er1</th><th class="sm">H2</th><th class="sm">Er2</th><td class="eor"></td></tr>
        </thead>
        <tbody>
          <tr><td>L1</td><td>L2</td><td class="cn">差分</td><td>4/8</td><td>100+/-10%</td><td>4.3/7.7</td><td>100.037</td><td class="cn">是</td><td>3.721</td><td>4.15</td><td></td><td></td><td class="eor"></td></tr>
          <tr><td>L1</td><td>L2</td><td class="cn">差分</td><td>5.5/9</td><td>90+/-10%</td><td>5.7/8.8</td><td>90.722</td><td class="cn">是</td><td>3.721</td><td>4.15</td><td></td><td></td><td class="eor"></td></tr>
          <tr><td>L1</td><td>L4</td><td class="cn">单端</td><td>35</td><td>50+/-10%</td><td>34</td><td>49.366</td><td class="cn">是</td><td>18.177</td><td>4.162</td><td></td><td></td><td class="eor"></td></tr>
          <tr><td>L1</td><td>L2</td><td class="cn">单端</td><td>5.5</td><td>50+/-10%</td><td>5.5</td><td>50.416</td><td class="cn">是</td><td>3.721</td><td>4.15</td><td></td><td></td><td class="eor"></td></tr>
          <tr><td>L10</td><td>L9/L11</td><td class="cn">差分</td><td>3.5/5</td><td>100+/-10%</td><td>3.5/5</td><td>100.524</td><td></td><td>4.331</td><td>4</td><td>9.576</td><td>4.25</td><td class="eor"></td></tr>
          <tr><td>L10</td><td>L9/L11</td><td class="cn">差分</td><td>4/6.5</td><td>100+/-10%</td><td>4/6.5</td><td>100.038</td><td></td><td>4.331</td><td>4</td><td>9.576</td><td>4.25</td><td class="eor"></td></tr>
          <tr><td>L10</td><td>L9/L11</td><td class="cn">单端</td><td>5</td><td>50+/-10%</td><td>5</td><td>49.675</td><td></td><td>4.331</td><td>4</td><td>9.576</td><td>4.25</td><td class="eor"></td></tr>
          <tr><td>L12</td><td>L11</td><td class="cn">单端</td><td>5.5</td><td>50+/-10%</td><td>5.5</td><td>50.527</td><td class="cn">是</td><td>3.736</td><td>4.15</td><td></td><td></td><td class="eor"></td></tr>
          <tr><td>L3</td><td>L2/L4</td><td class="cn">差分</td><td>4/6.5</td><td>100+/-10%</td><td>4/6.5</td><td>100.002</td><td></td><td>4.331</td><td>4</td><td>9.526</td><td>4.25</td><td class="eor"></td></tr>
          <tr><td>L3</td><td>L2/L4</td><td class="cn">单端</td><td>5</td><td>50+/-10%</td><td>5</td><td>49.635</td><td></td><td>4.331</td><td>4</td><td>9.526</td><td>4.25</td><td class="eor"></td></tr>
          <tr><td>L3</td><td>L2/L4</td><td class="cn">差分</td><td>3.5/5</td><td>100+/-10%</td><td>3.5/5</td><td>100.497</td><td></td><td>4.331</td><td>4</td><td>9.526</td><td>4.25</td><td class="eor"></td></tr>
          <tr><td>L3</td><td>L2/L4</td><td class="cn">差分</td><td>5/6.5</td><td>90+/-10%</td><td>5/6.5</td><td>90.919</td><td></td><td>4.331</td><td>4</td><td>9.526</td><td>4.25</td><td class="eor"></td></tr>
          <tr><td>L8</td><td>L7/L9</td><td class="cn">差分</td><td>4/6.5</td><td>100+/-10%</td><td>4/6.5</td><td>99.952</td><td></td><td>4.331</td><td>4</td><td>9.451</td><td>4.25</td><td class="eor"></td></tr>
          <tr><td>L8</td><td>L7/L9</td><td class="cn">差分</td><td>3.5/5</td><td>100+/-10%</td><td>3.5/5</td><td>100.457</td><td></td><td>4.331</td><td>4</td><td>9.451</td><td>4.25</td><td class="eor"></td></tr>
          <tr><td>L8</td><td>L7/L9</td><td class="cn">单端</td><td>5</td><td>50+/-10%</td><td>5</td><td>49.573</td><td></td><td>4.331</td><td>4</td><td>9.451</td><td>4.25</td><td class="eor"></td></tr>
        </tbody>
      </table>
      <div class="notes">
        <div class="nl blue"><span class="mk">备注：</span></div>
        <div class="nl three"><span>客户答复：</span><span>接受建议</span><span class="mk">不接受建议</span></div>
        <div class="nl"><span class="mk">备注：</span></div>
        <div class="nl"><span class="mk">答复：</span></div>
        <div class="nl"><span class="mk">审核：</span></div>
        <div class="nl sign"><span>时间：</span><span class="mk">签名：</span></div>
      </div>
      <div class="yellowbox"></div>
    </div>
  </div>
</section>
</body>
</html>
```
FILE: styles.css
```css
*,*::before,*::after{box-sizing:border-box}
html,body{margin:0;padding:0;height:100%;background:#000;overflow:hidden}
body{position:relative;width:2048px;height:1031px;font-family:"Liberation Mono","Noto Sans CJK SC",monospace;color:#000}
.defs{position:absolute}
.app{display:flex;flex-direction:column;width:2048px;height:1031px}

/* title bars */
.titlebar{display:flex;align-items:center;height:22px;background:#fff;flex:none;padding-left:2px}
.tlogo{width:15px;height:15px;flex:none}
.ttext{font:12.65px "Noto Sans","Noto Sans CJK SC",sans-serif;color:#8f8f8f;margin-left:6px;white-space:nowrap;flex:1}
.wctl{flex:none}
.wmin{width:10px;height:1px;background:#777;margin-right:34px}
.wmax{width:9px;height:10px;border:1px solid #777;margin-right:41px}
.wclose{width:11px;height:11px;margin-right:21px;flex:none}

/* main menu */
.menubar{display:flex;height:56px;flex:none;background:#9edcdc;border-top:2px solid #5a8c86;border-bottom:2px solid #e6f6f4;box-shadow:inset 2px 0 0 #d8f2f0,inset 0 -2px 0 #5f918b}
.menus{display:flex;flex:1;gap:18px;align-items:center;padding-left:15px;font:bold 14px "Liberation Serif",serif;color:#0c2a28;padding-bottom:2px}
.clock{width:414px;border-left:2px solid #5a8c86;display:flex;flex-direction:column;align-items:flex-end;padding:1px 6px 0 0;overflow:hidden;box-shadow:inset 2px 0 0 #d8f2f0;font:italic bold 15px "Liberation Serif",serif;color:#0c2a28}
.cline{display:flex;align-items:flex-start;gap:2px;height:17px}
.brand{font-size:24px;line-height:24px;letter-spacing:1px;margin-right:2px}
.date{letter-spacing:1.4px;line-height:17px}
.time{margin-right:14px;letter-spacing:1.4px;line-height:14px;margin-top:1px}

.workspace{flex:1;display:flex;min-height:0}
/* left layer column */
.sidebar{width:155px;flex:none;background:#52cdaa;border-left:3px solid #1f5f50;padding-top:3px;display:flex;flex-direction:column;font-weight:bold;overflow:hidden}
.infobox{height:18px;margin:0 2px 1px 0;background:#9edcdc;border:1px solid #0f3a34;font-size:15px;line-height:17px;padding-left:2px;color:#0d2422;white-space:pre;flex:none}
.matrixwrap{margin:2px 2px 0 0;height:26px;background:#9edcdc;border:1px solid #0f3a34;padding:2px;flex:none}
.matrixbtn{height:20px;border:2px solid;border-color:#d8f2f0 #5f918b #5f918b #d8f2f0;font-size:15px;line-height:16px;padding-left:1px;color:#0d2422}
.layerarea{display:flex;margin-top:10px;flex:none;height:861px}
.layers{width:118px;margin-left:4px;display:flex;flex-direction:column;gap:3px;flex:none}
.lblock{background:#0b1512;padding:2px 2px 1px 2px}
.lrow{display:flex;height:16px;align-items:flex-start}
.chk{width:14px;height:14px;background:#fff;flex:none;position:relative;margin-top:1px}
.chk::before{content:"";position:absolute;left:2px;top:2px;width:10px;height:10px;border:2px solid #000;background:#fff}
.chk.on{background:#0000b0}
.chk.on::before{border-color:#0000b0}
.sw{width:15px;height:15px;flex:none;margin:0 1px 0 3px}
.sw.red{background:#f00}
.ln{width:80px;margin-left:0;height:15px;background:#9edcdc;font-size:11.67px;line-height:15px;padding-left:2px;color:#0d2422;position:relative;white-space:nowrap}
.ln.white{background:#fff}.ln.green{background:#00a67e}.ln.orange{background:#ffc850}.ln.steel{background:#9db4bd}.ln.grey{background:#d8d8d8}
.mark{position:absolute;right:2px;top:5px;width:5px;height:5px;background:#0d2422;border:1px solid #fff;outline:1px solid #0d2422;outline-offset:-3px}
.vscroll{width:13px;margin-left:15px;flex:none;background:#3fae94;display:flex;flex-direction:column;height:861px;box-shadow:-15px 0 0 -12px #8fe0c8,-12px 0 0 -10px #2f8a74,-6px 0 0 -5px #8fe0c8}
.arrow{width:13px;height:13px;flex:none;display:block}
.vthumb{height:794px;background:#52cdaa;border:2px solid;border-color:#8fe0c8 #2f8a74 #2f8a74 #8fe0c8;flex:none}
.vtrack{flex:1}
.selected{margin:5px 3px 0 0;flex:none;height:20px;background:#ffc850;border:1px solid #0d2422;font-size:12px;line-height:14px;padding-left:2px;color:#0d2422}

.canvas{flex:1;min-width:0;background:#000}
.pcb{display:block}

.toolbar{width:108px;flex:none;background:#0b1512;padding:3px 2px 0 3px}
.tools{display:grid;grid-template-columns:repeat(2,39px);gap:1px 1px;justify-content:end;margin-right:1px}
.tool{width:39px;height:39px;background:#9edcdc;border:3px solid;border-color:#d8f2f0 #5f918b #5f918b #d8f2f0;padding:2px}
.tool svg{display:block;width:100%;height:100%}
.tool.rd{background:#a83232;border-color:#bd4a4a #7a1e1e #7a1e1e #bd4a4a}
.tool.rd svg{background:#9edcdc}
.tool.g{background:#c8c8c8;border-color:#eee #777 #777 #eee}
.tool.g.wh svg{background:#fff}
.sep{height:4px;background:#333}

/* generic window */
.win{position:absolute;display:flex;flex-direction:column}
.wtitle{display:flex;align-items:center;background:#fff;flex:none}
.wx{width:11px;height:11px;flex:none}

/* Features popup */
.features{left:190px;top:289px;width:332px;height:529px;background:#52cdaa;font-weight:bold;color:#0d2422}
.fetitle{height:31px;padding-left:8px}
.fetitle .wx{margin-right:10px}
.layerbar{height:28px;padding:3px 3px 4px 3px;flex:none}
.layerred{height:21px;background:#f00;border:2px solid #16241f;font-size:11.67px;line-height:16px;padding-left:2px;white-space:pre;color:#3a0000}
.fmenu{height:25px;margin-bottom:5px;background:#9edcdc;border:2px solid;border-color:#d8f2f0 #3f7a70 #3f7a70 #d8f2f0;display:flex;gap:16px;padding-left:12px;font-size:11.67px;line-height:20px;flex:none}
.flist{margin:0 2px 4px 3px;height:355px;border:2px solid;border-color:#1f5f50 #8fe0c8 #8fe0c8 #1f5f50;flex:none;display:flex;flex-direction:column;padding:2px 1px 0 3px}
.flistin{display:flex;flex:1;min-height:0}
.ftext{flex:1;min-width:0;overflow:hidden;border:2px solid;border-color:#2f8a74 #8fe0c8 #8fe0c8 #2f8a74;padding:1px 0 0 3px}
.fpre{margin:0;font:bold 11.67px/13px "Liberation Mono",monospace;color:#0d2422}
.hl{background:#000;color:#fff}
.fvs{width:14px;margin-left:6px;background:#3fae94;display:flex;flex-direction:column;flex:none}
.fvthumb{height:32px;background:#52cdaa;border:2px solid;border-color:#8fe0c8 #2f8a74 #2f8a74 #8fe0c8;flex:none}
.fhs{height:13px;margin:6px 20px 2px 0;background:#3fae94;display:flex;flex:none}
.harrow{width:13px;height:13px;flex:none}
.fhthumb{flex:1;background:#52cdaa;border:2px solid;border-color:#8fe0c8 #2f8a74 #2f8a74 #8fe0c8}
.fact{display:flex;height:54px;flex:none;border-bottom:1px solid #0d2422}
.fspace{width:111px;flex:none}
.fstack{width:108px;display:flex;flex-direction:column;background:#5fa898;flex:none}
.whitebtn{height:27px;margin:1px;background:#fff;border:3px solid #8fb0aa;text-align:center;font-size:11.67px;line-height:20px}
.whitebtn.active{border:3px solid #aaa;outline:2px solid #0d2422;outline-offset:-1px}
.bevel{background:#9edcdc;border:2px solid;border-color:#d8f2f0 #3f7a70 #3f7a70 #d8f2f0;text-align:center;font-size:11.67px;box-shadow:0 0 0 1px #0d2422}
.update{flex:1;line-height:46px;margin-left:2px}
.closebtn{height:25px;line-height:20px;flex:none;margin:1px 1px 0}

/* Popview */
.popview{left:1264px;top:35px;width:717px;height:325px;background:#52cdaa}
.poptitle{height:30px;padding-left:8px}
.poptitle .wx{margin-right:9px}
.popbody{flex:1;display:flex;min-height:0;padding:3px 0 0 4px;background:#2f8a74}
.popcanvas{width:672px;background:#000;flex:none;overflow:hidden;margin-top:1px}
.popsvg{display:block}
.popside{margin-left:5px;width:36px;flex:1;background:#0b1512;display:flex;flex-direction:column;gap:1px}
.pbtn{height:34px;background:#9edcdc;border:3px solid;border-color:#d8f2f0 #3f7a70 #3f7a70 #d8f2f0;padding:3px;flex:none;box-shadow:inset 0 0 0 1px #5f918b}
.pbtn svg{display:block;width:100%;height:100%}
.pfill{flex:1;background:#52cdaa}

/* Word */
.word{left:1149px;top:360px;width:899px;height:671px;background:#bfdbff;font-family:"Noto Sans CJK SC","Noto Sans",sans-serif;color:#15428b}
.wdtitle{height:30px;background:#fff;display:flex;align-items:center;flex:none;color:#333;position:relative}
.orb{position:absolute;left:5px;top:8px;width:38px;height:38px;border-radius:50%;background:radial-gradient(circle at 50% 40%,#fff,#cfd8e4 70%,#8a9ab0);border:1px solid #9aaabd;display:flex;align-items:center;justify-content:center;z-index:3}
.qat{margin-left:41px;width:94px;height:22px;border:1px solid #c9d8ea;border-left:0;border-radius:0 11px 11px 0;background:linear-gradient(#eef4fb,#d7e4f4);display:flex;align-items:center;gap:6px;padding-left:12px;flex:none;margin-top:-1px}
.caret{font-size:9px;color:#9ab;line-height:1}
.qatdrop{font-size:10px;color:#345;margin-left:4px;width:35px;flex:none}
.wdname{font-size:12.8px;white-space:pre;width:344px;flex:none;letter-spacing:-.1px}
.ctxtab{width:105px;height:30px;line-height:30px;padding-left:7px;font-size:12px;background:linear-gradient(#fff,#fdf6d2 70%,#f4e08c);flex:none;color:#333}
.wmin2{width:10px;height:1px;background:#222;margin-left:227px;flex:none}
.wmax2{width:10px;height:10px;border:1px solid #222;margin-left:30px;flex:none}
.wdtabs{height:26px;flex:none;display:flex;padding-left:46.5px;align-items:flex-end;background:#bfdbff}
.tab{padding:0 14.5px;height:24px;line-height:23px;font-size:12.5px;white-space:nowrap;width:auto}
.tab.act{background:linear-gradient(#fff,#e4eefb);border:1px solid #9ebfe6;border-bottom:0;border-radius:3px 3px 0 0;padding:0 11.5px;margin:0 1.5px;width:47px}
.tab.acro{font-size:11.8px}
.ribbon{height:113px;flex:none;display:flex;gap:3px;padding:3px 0 9px 3px;background:linear-gradient(#dbe9f9 0,#cfe0f6 80%,#9ebbdc 100%);overflow:hidden}
.rg{display:flex;flex-direction:column;height:101px;border:1px solid #a9c5e6;border-radius:3px;background:linear-gradient(#eaf2fc,#d2e2f6);flex:none;position:relative}
.rb{flex:1;min-height:0}
.rl{height:20px;flex:none;background:#bed4ee;font-size:12px;line-height:19px;text-align:center;color:#4f74a8;position:relative}
.launch{position:absolute;right:4px;top:5px;width:8px;height:8px;border:1px solid #7c98bc;background:#eef}
.drop{font-size:8px;color:#667;line-height:1}
.rclip{width:74px}.rfont{width:316px}.rpara{width:164px}.rstyle{width:297px}.redit{width:60px}
.clipb{display:flex;padding:5px 0 0 12px;gap:12px}
.paste{display:flex;flex-direction:column;align-items:center;width:28px;font-size:12px;color:#15428b;line-height:16px}
.paste span:first-of-type{margin-top:10px;white-space:nowrap}
.clipicons{display:flex;flex-direction:column;gap:7px;padding-top:8px;align-items:center}
.fontb{display:flex;flex-direction:column;gap:10px;padding:11px 0 0 3px}
.frow{display:flex;gap:3px;height:24px}
.combo{height:24px;background:#e8f0fa;border:1px solid #c9d9ec;font-size:12px;color:#222;line-height:22px;padding-left:3px;position:relative}
.combo .drop{position:absolute;right:7px;top:7px}
.c1{width:125px}.c2{width:53px;margin-left:-3px}
.bg{display:flex;border:1px solid #9db9dc;border-radius:3px;background:linear-gradient(#eef4fc,#c9dbf1);height:24px;flex:none;align-items:stretch}
.bi{display:flex;align-items:center;justify-content:center;font-size:11px;color:#222;line-height:1;flex:none}
.bi+.bi{border-left:1px solid #d5e2f3}
.ser{font:bold 13px "Liberation Serif",serif;color:#334}
.ser sup,.ser sub{font-size:7px}
.big{font-size:16px}
.it{font-style:italic}.st{text-decoration:line-through;font-size:10px}
.tiny{font-size:8px;color:#446}
.wen{font-size:9px;flex-direction:column;color:#15428b;line-height:9px;font-weight:bold}
.hi{font:bold 10px/11px "Liberation Sans",sans-serif;border-bottom:3px solid #ff0;color:#333;padding:0 5px 0 1px;margin-right:3px}
.fa{border-bottom:3px solid #e00000;line-height:12px;padding:0 2px;margin-right:1px;color:#2a5aa8;font-size:15px}
.ga{color:#555;font-size:15px}
.zi{border:1px solid #333;border-radius:50%;width:17px;height:17px;font-size:10px;line-height:15px;text-align:center;color:#222}
.boxa{border:1px solid #456;margin:3px 3px;font-size:13px}
.w21{width:21px}.w23{width:23px}.w24{width:24px}.w27{width:27px}.w29{width:29px}.w30{width:30px}.w32{width:32px}.w33{width:33px}.w36{width:36px}
.parab{display:flex;flex-direction:column;gap:3px;padding:4px 0 0 4px}
.prow{display:flex;gap:3px;height:22px}
.pb{height:22px}
.ic svg{width:17px;height:15px;display:block}
.aon{background:linear-gradient(#ffdb9c,#ffb75e)}
.az{font:bold 8px/8px "Liberation Sans",sans-serif;gap:1px}
.azstack{display:flex;flex-direction:column}
.aza{color:#2a6ab8}.azz{color:#b04a4a}
.styleb{display:flex;padding:4px 0 0 4px}
.gal{width:233px;height:60px;display:flex;align-items:center;gap:6px;border:1px solid #c2d4ea;border-radius:2px;padding-left:1px;position:relative;flex:none}
.sty{width:64px;height:49px;background:#fff;display:flex;flex-direction:column;align-items:center;justify-content:space-between;flex:none;padding:5px 0 2px}
.sty.cur{width:71px;height:57px;border:2px solid #f3b04a;outline:1px solid #a88b5a;outline-offset:-1px;padding:8px 0 4px}
.sty3{margin-left:2px;overflow:hidden}
.s1{font:11.5px "Liberation Sans",sans-serif;color:#111;white-space:nowrap}
.s2{font-size:12px;color:#333;white-space:nowrap;line-height:14px}
.s3{font:bold 26px/28px "Liberation Sans",sans-serif;color:#000;margin-top:-4px}
.galscroll{position:absolute;right:1px;top:1px;width:14px;height:56px;display:flex;flex-direction:column;gap:1px}
.galscroll span{flex:1;font-size:8px;background:linear-gradient(#eaf2fc,#c9dbf1);text-align:center;color:#667;border-radius:2px}
.chg{display:flex;flex-direction:column;align-items:center;width:55px;margin-left:2px;font-size:12px;white-space:nowrap;color:#3a6aa8;line-height:15px}
.chg span:first-of-type{margin-top:8px}
.editb{display:flex;flex-direction:column;align-items:center;width:30px;padding-top:8px;font-size:12px;color:#3a6aa8;line-height:15px;gap:9px}
.redit .rl{width:100%}

.wdbody{flex:1;min-height:0;padding:0 26px 0 79px;background:linear-gradient(#a9c2e2,#6d90bf);box-shadow:inset 1px 0 0 #fff}
.page{height:100%;background:#fff;padding-left:41px;position:relative;overflow:hidden;border-left:1px solid #667;color:#000;font-family:"Liberation Mono","Noto Sans CJK SC",monospace}
.imp{margin:0 0 2px -2px;font-size:20px;font-weight:normal;line-height:21px;color:#0000d0;-webkit-text-stroke:.3px #0000d0}
.mk::after,.imptab td::after,.imptab th::after{content:"↵";font:8px "DejaVu Sans",sans-serif;color:#999;margin-left:1px;font-weight:normal;letter-spacing:0;-webkit-text-stroke:0}
.rmark{position:absolute;left:761px;top:3px}
.rmark::after{content:"↵";font:9px "DejaVu Sans",sans-serif;color:#999}
.imptab{border-collapse:collapse;table-layout:fixed;width:728px}
.k48{width:48px}.k57{width:57px}.k92{width:92px}.k88{width:88px}.k76{width:76px}.k70{width:70px}.k38{width:38px}.k39{width:39px}.k14{width:14px}
.imptab th,.imptab td{border:1px solid #000;height:22.13px;padding:0 0 0 1px;font-size:11px;letter-spacing:-.6px;line-height:12px;font-weight:normal;white-space:nowrap;text-align:left;overflow:hidden}
.imptab td.cn{font-size:12px;letter-spacing:0}
.imptab th{background:#99ffcc;color:#0000c8;font-size:13px;font-weight:bold;letter-spacing:0}
.imptab th.pk{background:#ff99cc}
.imptab th.sm{font-size:11px;letter-spacing:-.6px}
.imptab td.eor{border:0;padding-left:3px;background:#fff}
.notes{margin-top:1px;margin-left:-2px;width:732px}
.nl{display:flex;height:21px;line-height:21px;font-size:15.5px;white-space:nowrap;font-family:"Noto Sans CJK SC",sans-serif;color:#000;font-weight:300;position:relative}
.nl.blue{color:#0000c0}
.nl.three span:nth-child(1){width:246px}
.nl.three span:nth-child(2){width:225px}
.nl.sign span:nth-child(1){width:519px}
.nl::after{content:"↵";position:absolute;left:719px;top:0;font:8px/21px "DejaVu Sans",sans-serif;color:#999}
.yellowbox{position:absolute;left:22px;top:106px;width:769px;height:38px;border:4px solid #ffff2e;box-shadow:0 2px 2px rgba(0,0,0,.4),inset 0 2px 2px rgba(0,0,0,.35);pointer-events:none}
```
